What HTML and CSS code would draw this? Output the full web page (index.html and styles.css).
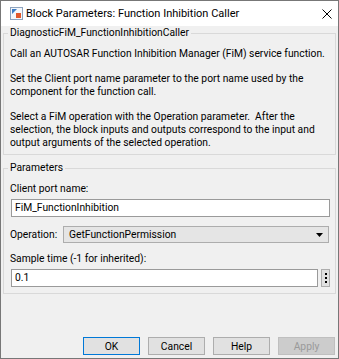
FILE: index.html
```
<!DOCTYPE html>
<html>
<head>
    <title>Block Parameters: Function Inhibition Caller</title>
    <link rel="stylesheet" href="styles.css">
</head>
<body>
    <div class="window">
        <div class="titlebar">
            <svg class="app-icon" width="13" height="13" viewBox="0 0 13 13">
                <rect x="0.5" y="0.5" width="12" height="12" fill="#f4f7fb" stroke="#8ea3bd"/>
                <path d="M2 2 H7 L2 7 Z" fill="#3c7cc4"/>
                <rect x="6" y="6" width="5" height="5" fill="#e2582b"/>
            </svg>
            <span class="title">Block Parameters: Function Inhibition Caller</span>
            <svg class="close" width="10" height="10" viewBox="0 0 10 10">
                <path d="M0.5 0.5 L9.5 9.5 M9.5 0.5 L0.5 9.5" stroke="#000" stroke-width="1"/>
            </svg>
        </div>

        <div class="content">
            <fieldset class="group desc">
                <legend>DiagnosticFiM_FunctionInhibitionCaller</legend>
                <p>Call an AUTOSAR Function Inhibition Manager (FiM) service function.</p>
                <p>Set the Client port name parameter to the port name used by the component for the function call.</p>
                <p>Select a FiM operation with the Operation parameter.&nbsp; After the selection, the block inputs and outputs correspond to the input and output arguments of the selected operation.</p>
            </fieldset>

            <fieldset class="group params">
                <legend>Parameters</legend>
                <label class="field-label">Client port name:</label>
                <div class="textbox">FiM_FunctionInhibition</div>

                <div class="op-row">
                    <span class="op-label">Operation:</span>
                    <div class="dropdown">
                        <span>GetFunctionPermission</span>
                        <svg width="7" height="4" viewBox="0 0 7 4"><path d="M0 0 H7 L3.5 4 Z" fill="#000"/></svg>
                    </div>
                </div>

                <label class="field-label sample">Sample time (-1 for inherited):</label>
                <div class="sample-row">
                    <div class="textbox">0.1</div>
                    <div class="more-btn"><i></i><i></i><i></i></div>
                </div>
            </fieldset>

            <div class="footer">
                <button class="default">OK</button>
                <button>Cancel</button>
                <button>Help</button>
                <button disabled>Apply</button>
            </div>
        </div>
    </div>
</body>
</html>
```

FILE: styles.css
```
* { box-sizing: border-box; }
body {
    margin: 0;
    font-family: Roboto, "Liberation Sans", sans-serif;
    font-size: 10.3px;
    color: #000;
}
.window {
    width: 339px;
    height: 359px;
    border: 1px solid #777;
    display: flex;
    flex-direction: column;
    background: #f0f0f0;
}
.titlebar {
    height: 25px;
    background: #fff;
    display: flex;
    align-items: center;
    padding-left: 9px;
    flex-shrink: 0;
}
.app-icon { margin-right: 3px; }
.title { font-size: 11px; flex: 1; }
.close { margin-right: 6px; }

.content {
    flex: 1;
    display: flex;
    flex-direction: column;
}
.group {
    margin: 0 2px;
    border: 1px solid #d9d9d9;
    padding: 0 5px 5px 6px;
    min-width: 0;
}
.group legend {
    line-height: 14px;
    padding: 0 2px;
    margin-left: -2px;
}
.desc { padding-top: 7px; }
.desc p {
    margin: 0 0 12px;
    line-height: 13px;
}
.desc p:last-child { margin-bottom: 0; }

.params {
    margin-top: 6px;
    padding-top: 7px;
    padding-bottom: 6px;
}
.field-label {
    display: block;
    line-height: 13px;
    margin-bottom: 4px;
}
.field-label.sample { margin-top: 9px; }
.textbox {
    height: 18px;
    margin-left: 1px;
    background: #fff;
    border: 1px solid #9a9a9a;
    padding: 0 3px;
    line-height: 16px;
}
.op-row {
    display: flex;
    align-items: center;
    margin-top: 9px;
}
.op-label { width: 53px; }
.dropdown {
    flex: 1;
    height: 17px;
    margin-right: 1px;
    background: #e5e5e5;
    border: 1px solid #adadad;
    display: flex;
    align-items: center;
    justify-content: space-between;
    padding: 0 5px 0 5px;
}
.sample-row {
    display: flex;
    gap: 3px;
}
.sample-row .textbox { flex: 1; }
.more-btn {
    width: 9px;
    height: 18px;
    background: #e1e1e1;
    border: 1px solid #adadad;
    display: flex;
    flex-direction: column;
    align-items: center;
    justify-content: center;
    gap: 2px;
}
.more-btn i {
    width: 2px;
    height: 2px;
    background: #000;
}

.footer {
    margin-top: auto;
    display: flex;
    justify-content: flex-end;
    gap: 8px;
    padding: 0 3px 3px 0;
}
button {
    width: 57px;
    height: 18px;
    font-family: inherit;
    font-size: 10.3px;
    color: #000;
    background: #e1e1e1;
    border: 1px solid #adadad;
    padding: 0;
}
button.default { border-color: #0078d7; }
button:disabled {
    background: #cccccc;
    border-color: #bfbfbf;
    color: #9a9a9a;
}
```
